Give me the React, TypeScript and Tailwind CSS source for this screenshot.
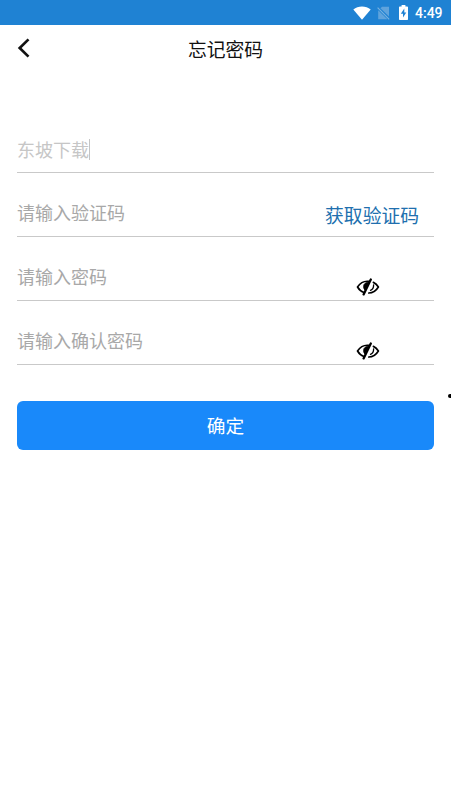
import React from "react";

function StatusBar() {
  return (
    <div className="flex h-[25px] items-center bg-[#1f82d3] pl-[353px] text-white">
      <svg className="h-[14px] w-[18px] shrink-0" viewBox="0 0 18 14" fill="currentColor">
        <path d="M0.3 3.6C5 -0.6 13 -0.6 17.7 3.6L9 13.8Z" />
      </svg>
      <svg className="ml-[6px] h-[14px] w-[13px] shrink-0" viewBox="0 0 13 14">
        <path d="M5 0.8H12V10.6L3.4 2.2Z" fill="#5fa3dc" />
        <path d="M1.2 4.2L10.4 13.3H1.2Z" fill="#5fa3dc" />
        <path d="M0.6 1.6L12.2 13.4" stroke="#79b2e0" strokeWidth="1.1" />
      </svg>
      <svg className="ml-[9px] h-[15px] w-[9px] shrink-0" viewBox="0 0 9 15">
        <path d="M2.6 0H6.4V1.5H8.2Q9 1.5 9 2.3V14.2Q9 15 8.2 15H0.8Q0 15 0 14.2V2.3Q0 1.5 0.8 1.5H2.6Z" fill="white" />
        <path d="M5.3 3.6L1.8 8.8H4V12.6L7.3 7.4H5.3Z" fill="#1f82d3" />
      </svg>
      <span className="ml-[7px] font-[Roboto,sans-serif] text-[14px] font-medium leading-none">4:49</span>
    </div>
  );
}

function HiddenEye() {
  return (
    <svg className="h-[18px] w-[24px]" viewBox="0 0 24 18" fill="none" stroke="black" strokeWidth="1.7" strokeLinecap="round" strokeLinejoin="round">
      <path d="M13 3.4C8 2.7 4.2 5 1.5 9C3.2 11.8 5.4 13.8 8 14.5" />
      <path d="M17.4 4.4C19.7 5.4 21.2 7 22.4 9C20 12.9 16.9 15 12.8 15" />
      <path d="M17.6 7C17.7 9.4 16.6 11.4 14.5 12.3" strokeWidth="1.3" />
      <path d="M13 4.2C9.4 4.2 7.6 6 7.6 8.5C7.6 10 8 11 8.9 12L10.4 9.5L12.2 6.5Z" fill="black" strokeWidth="0.8" />
      <path d="M14.8 1.5L7.6 16.4" strokeWidth="2.3" />
    </svg>
  );
}

function Field({ label, focused = false, children }: { label: string; focused?: boolean; children?: React.ReactNode }) {
  return (
    <div className="flex h-16 justify-between border-b border-[#c9c9c9]">
      <div className={focused ? "mt-[30px] flex h-[21px] items-center self-start" : "mt-[29px] flex h-[21px] items-center self-start"}>
        <span className={focused ? "mb-[2px] text-[18px] leading-none text-[#c6c6c6]" : "mb-[2px] text-[18px] leading-none text-[#a8a8a8]"}>{label}</span>
        {focused && <span className="h-[21px] w-px bg-[#c4c4c4]" />}
      </div>
      {children}
    </div>
  );
}

export default function App() {
  return (
    <main className="h-[801px] w-[451px] overflow-hidden bg-white font-['Noto_Sans_CJK_SC',sans-serif]">
      <StatusBar />
      <header className="grid h-[48px] grid-cols-[60px_1fr_60px] items-center">
        <svg className="ml-[17px] mt-[-2px] h-[20px] w-[14px]" viewBox="0 0 14 20" fill="none" stroke="#111" strokeWidth="2.7">
          <path d="M11.5 1.4L2.7 10L11.5 18.6" />
        </svg>
        <h1 className="text-center text-[18.8px] leading-none text-[#111]">忘记密码</h1>
      </header>
      <div className="flex">
        <form className="ml-[17px] mt-9 w-[417px] shrink-0">
          <Field label="东坡下载" focused />
          <Field label="请输入验证码">
            <button type="button" className="mr-[15px] mt-[32px] self-start text-[18.8px] leading-[20px] text-[#206fae]">获取验证码</button>
          </Field>
          <Field label="请输入密码">
            <span className="mr-[54px] mt-[41px]"><HiddenEye /></span>
          </Field>
          <Field label="请输入确认密码">
            <span className="mr-[54px] mt-[41px]"><HiddenEye /></span>
          </Field>
          <button type="button" className="mt-9 flex h-[49px] w-full items-center justify-center rounded-[6px] bg-[#1989fa] text-[18.7px] leading-none text-white">确定</button>
        </form>
        <span className="ml-[14px] mt-[321px] h-[4px] w-[3px] shrink-0 rounded-l-full bg-black" />
      </div>
    </main>
  );
}
